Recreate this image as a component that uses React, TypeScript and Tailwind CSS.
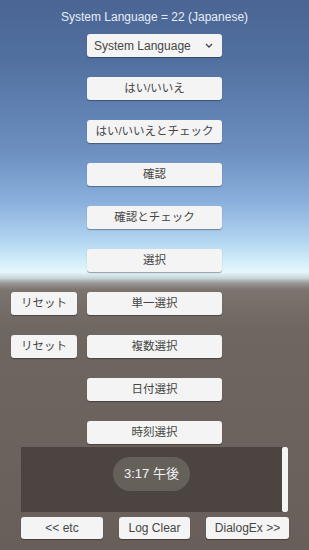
import React from 'react';

const font = { fontFamily: '"Liberation Sans", "Noto Sans CJK JP", Arial, sans-serif' };

function Btn({ label, w, jp = false }: { label: string; w: string; jp?: boolean }) {
  return (
    <button
      className={`${w} h-[23px] flex items-center justify-center rounded-[3px] bg-[#f4f4f4] text-[#464646] shadow-[0_1px_1px_rgba(0,0,0,0.35)] ${jp ? 'text-[11.5px]' : 'text-[12px]'}`}
    >
      {label}
    </button>
  );
}

const rows: { label: string; reset?: boolean }[] = [
  { label: 'はい/いいえ' },
  { label: 'はい/いいえとチェック' },
  { label: '確認' },
  { label: '確認とチェック' },
  { label: '選択' },
  { label: '単一選択', reset: true },
  { label: '複数選択', reset: true },
  { label: '日付選択' },
  { label: '時刻選択' },
];

export default function App() {
  return (
    <div
      style={font}
      className="w-[309px] h-[550px] overflow-hidden flex flex-col bg-[linear-gradient(to_bottom,#4b6594_0px,#5170a0_60px,#6b8fc0_150px,#88aedb_200px,#b0d4f0_240px,#d4eefa_262px,#e4f7fc_272px,#c8d8dc_278px,#9a9896_283px,#7b736e_290px,#6e6661_330px,#695f5a_550px)]"
    >
      <div className="h-[34px] flex items-center justify-center text-[12px] text-[#e6edf6]">
        System Language = 22 (Japanese)
      </div>

      <div className="pl-[87px]">
        <div className="w-[135px] h-[23px] flex items-center justify-between pl-[7px] pr-[9px] rounded-[3px] bg-[#f4f4f4] text-[12px] text-[#464646] shadow-[0_1px_1px_rgba(0,0,0,0.35)]">
          <span>System Language</span>
          <svg width="8" height="5" viewBox="0 0 8 5" fill="none" stroke="#464646" strokeWidth="1.3">
            <path d="M1 1l3 3 3-3" />
          </svg>
        </div>
      </div>

      {rows.map((r) => (
        <div key={r.label} className={`mt-[20px] flex gap-[10px] ${r.reset ? 'pl-[11px]' : 'pl-[87px]'}`}>
          {r.reset && <Btn label="リセット" w="w-[66px]" jp />}
          <Btn label={r.label} w="w-[135px]" jp />
        </div>
      ))}

      <div className="mt-[3px] ml-[21px] w-[267px] h-[65px] flex bg-[#4b4440]">
        <div className="flex-1 flex justify-center pt-[10px]">
          <div className="w-[77px] h-[34px] rounded-full bg-[#66605b] flex items-center justify-center text-[13px] text-[#f2f2f2]">
            3:17 午後
          </div>
        </div>
        <div className="w-[6px] h-full rounded-[2px] bg-[#f4f4f4]" />
      </div>

      <div className="mt-[5px] pl-[21px] flex gap-[16px]">
        <button className="w-[82px] h-[22px] flex items-center justify-center rounded-[3px] bg-[#f4f4f4] text-[12px] text-[#464646] shadow-[0_1px_1px_rgba(0,0,0,0.35)]">
          &lt;&lt; etc
        </button>
        <button className="w-[71px] h-[22px] flex items-center justify-center rounded-[3px] bg-[#f4f4f4] text-[12px] text-[#464646] shadow-[0_1px_1px_rgba(0,0,0,0.35)]">
          Log Clear
        </button>
        <button className="w-[83px] h-[22px] flex items-center justify-center rounded-[3px] bg-[#f4f4f4] text-[12px] text-[#464646] shadow-[0_1px_1px_rgba(0,0,0,0.35)]">
          DialogEx &gt;&gt;
        </button>
      </div>
    </div>
  );
}
